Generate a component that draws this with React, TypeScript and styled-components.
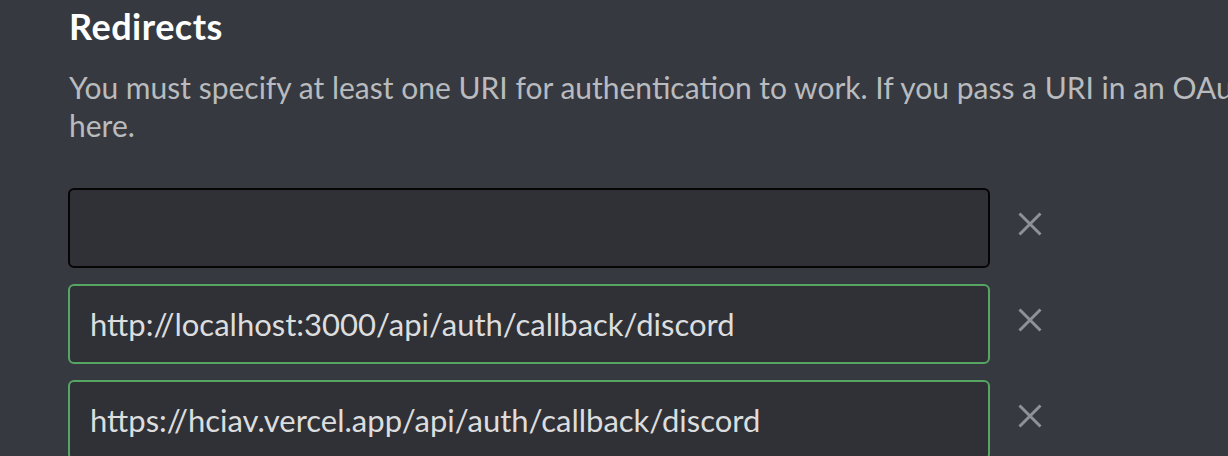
import styled, { createGlobalStyle } from 'styled-components';

const GlobalStyle = createGlobalStyle`
  html, body {
    margin: 0;
    padding: 0;
    background: #36393f;
    overflow: hidden;
  }
  body {
    font-family: Lato, 'Open Sans', sans-serif;
  }
`;

const Page = styled.main`
  width: 1228px;
  height: 456px;
  padding: 4px 0 0 68px;
  box-sizing: border-box;
  background: #36393f;
  overflow: hidden;
`;

const Heading = styled.h2`
  margin: 0;
  font-size: 36px;
  line-height: 44px;
  font-weight: 700;
  letter-spacing: 0.5px;
  color: #ffffff;
  padding-left: 1px;
`;

const Description = styled.p`
  margin: 20px 0 0;
  padding-left: 1px;
  font-size: 30px;
  line-height: 38px;
  color: #b9bbbe;
  white-space: nowrap;
`;

const UriList = styled.div`
  margin-top: 44px;
  display: flex;
  flex-direction: column;
  gap: 16px;
`;

const Row = styled.div`
  display: flex;
  align-items: center;
`;

const UriInput = styled.input<{ $valid?: boolean }>`
  width: 922px;
  height: 80px;
  box-sizing: border-box;
  padding: 0 20px;
  border-radius: 6px;
  border: 2px solid ${(p) => (p.$valid ? '#56a563' : '#050506')};
  background: #303136;
  color: #dcddde;
  font-family: Lato, 'Open Sans', sans-serif;
  font-size: 31px;
  outline: none;
`;

const RemoveButton = styled.button`
  margin: 0 0 8px 28px;
  width: 24px;
  height: 24px;
  padding: 0;
  border: none;
  background: transparent;
  color: #8e9297;
  cursor: pointer;
  display: flex;
  align-items: center;
  justify-content: center;
`;

const CloseIcon = () => (
  <svg width="24" height="24" viewBox="0 0 24 24" fill="none">
    <path d="M1.5 1.5L22.5 22.5M22.5 1.5L1.5 22.5" stroke="currentColor" strokeWidth="3" />
  </svg>
);

const uris = [
  { value: '', valid: false },
  { value: 'http://localhost:3000/api/auth/callback/discord', valid: true },
  { value: 'https://hciav.vercel.app/api/auth/callback/discord', valid: true },
];

export default function App() {
  return (
    <>
      <GlobalStyle />
      <Page>
        <Heading>Redirects</Heading>
        <Description>
          You must specify at least one URI for authentication to work. If you pass a URI in an OAuth request, it must exactly match one of the URIs you enter
          <br />
          here.
        </Description>
        <UriList>
          {uris.map((u, i) => (
            <Row key={i}>
              <UriInput defaultValue={u.value} $valid={u.valid} />
              <RemoveButton aria-label="Remove">
                <CloseIcon />
              </RemoveButton>
            </Row>
          ))}
        </UriList>
      </Page>
    </>
  );
}
